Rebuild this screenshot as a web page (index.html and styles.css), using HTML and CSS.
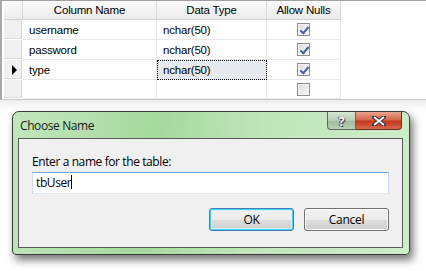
FILE: index.html
```html
<!DOCTYPE html>
<html lang="en">
  <head>
    <meta charset="utf-8">
    <title>Choose Name</title>
    <link rel="stylesheet" href="styles.css">
  </head>
  <body>
<div class="designer">
  <div class="grid">
    <div class="corner"></div>
    <div class="head">Column Name</div>
    <div class="head">Data Type</div>
    <div class="head">Allow Nulls</div>

    <div class="rowhead"></div>
    <div class="cell">username</div>
    <div class="cell">nchar(50)</div>
    <div class="cell check"><span class="box on"></span></div>

    <div class="rowhead"></div>
    <div class="cell">password</div>
    <div class="cell">nchar(50)</div>
    <div class="cell check"><span class="box on"></span></div>

    <div class="rowhead"><span class="pointer"></span></div>
    <div class="cell">type</div>
    <div class="cell current">nchar(50)</div>
    <div class="cell check"><span class="box on"></span></div>

    <div class="rowhead"></div>
    <div class="cell"></div>
    <div class="cell"></div>
    <div class="cell check"><span class="box"></span></div>
  </div>
</div>
<div class="below">
  <div class="dialog">
    <div class="titlebar">
      <span class="title">Choose Name</span>
      <div class="controls">
        <span class="ctl help">?</span>
        <span class="ctl close">
          <svg width="14" height="10" viewBox="0 0 14 10"><path d="M2 1 L12 9 M12 1 L2 9" stroke="#333" stroke-width="4" stroke-linecap="square"/><path d="M2 1 L12 9 M12 1 L2 9" stroke="#fff" stroke-width="2"/></svg>
        </span>
      </div>
    </div>
    <div class="client">
      <div class="label">Enter a name for the table:</div>
      <div class="textbox">tbUser<span class="caret"></span></div>
      <div class="buttons">
        <button class="btn default">OK</button>
        <button class="btn">Cancel</button>
      </div>
    </div>
  </div>
</div>
  </body>
</html>
```

FILE: styles.css
```css
* {
  margin: 0px;
  padding: 0px;
  box-sizing: border-box;
}
body {
  background-color: white;
  width: 426px;
  height: 271px;
  overflow: hidden;
  font-family: 'Liberation Sans', sans-serif;
}
.designer {
  height: 100px;
  border-top: 1px solid #a0a0a0;
  border-left: 2px solid #a9a9a9;
  padding-left: 2px;
  border-bottom: 1px solid #c8c8c8;
}
.grid {
  display: grid;
  grid-template-columns: 19px 134px 110px 74px;
  grid-template-rows: 19px 20px 20px 20px 19px;
  font-size: 11.5px;
  letter-spacing: -0.2px;
  color: black;
}
.corner {
  background: linear-gradient(#fafafa, #ececec);
  border-right: 1px solid #d8d8d8;
  border-bottom: 1px solid #d0d0d0;
}
.head {
  background: linear-gradient(#fbfbfb, #ebebeb);
  border-right: 1px solid #d8d8d8;
  border-bottom: 1px solid #d0d0d0;
  display: flex;
  align-items: center;
  justify-content: center;
}
.rowhead {
  background-color: #f0f0f0;
  border-right: 1px solid #ffffff;
  border-bottom: 1px solid #ffffff;
  box-shadow: inset -1px -1px 0px #dcdcdc;
  display: flex;
  align-items: center;
  justify-content: center;
}
.pointer {
  width: 0px;
  height: 0px;
  border-top: 5px solid transparent;
  border-bottom: 5px solid transparent;
  border-left: 5px solid black;
  margin-left: 2px;
}
.cell {
  border-right: 1px solid #e8e8e8;
  border-bottom: 1px solid #e8e8e8;
  display: flex;
  align-items: center;
  padding-left: 6px;
}
.current {
  background-color: #e6eaef;
  border: 1px dotted black;
  padding-left: 5px;
}
.check {
  justify-content: center;
  padding-left: 0px;
}
.box {
  width: 13px;
  height: 13px;
  border: 1px solid #8f8f8f;
  background: linear-gradient(135deg, #dcdcdc, #f8f8f8);
  box-shadow: inset 0px 0px 0px 1px #f4f4f4;
  position: relative;
}
.box.on::after {
  content: "";
  position: absolute;
  left: 4px;
  top: 1px;
  width: 3px;
  height: 7px;
  border-right: 2px solid #4a5d9c;
  border-bottom: 2px solid #4a5d9c;
  transform: rotate(40deg);
}
.below {
  height: 170px;
  background: linear-gradient(#ececec, #ffffff 10px);
  padding-top: 11px;
  padding-left: 12px;
}
.dialog {
  width: 398px;
  height: 144px;
  border: 1px solid #3a3a3a;
  border-radius: 7px 7px 4px 4px;
  background: linear-gradient(100deg, #c2e6bd 0%, #a6d99e 35%, #bfe5b9 60%, #cfeccb 100%);
  box-shadow: 3px 5px 9px rgba(0, 0, 0, 0.55);
  padding: 0px 6px 6px 5px;
  display: flex;
  flex-direction: column;
  font-family: 'Open Sans', sans-serif;
  letter-spacing: -0.4px;
}
.titlebar {
  height: 26px;
  display: flex;
  justify-content: space-between;
  align-items: flex-start;
}
.title {
  font-size: 12px;
  padding-left: 2px;
  padding-top: 5px;
  color: #1a1a1a;
}
.controls {
  display: flex;
  margin-right: 1px;
  letter-spacing: 0px;
}
.ctl {
  height: 18px;
  display: flex;
  align-items: center;
  justify-content: center;
  border: 1px solid #5c6a5c;
  border-top: none;
}
.help {
  width: 29px;
  border-radius: 0px 0px 0px 4px;
  background: linear-gradient(#d6e6d4, #b7cdb5 50%, #9fba9c 51%, #b9d0b5);
  color: white;
  font-weight: bold;
  font-size: 13px;
  text-shadow: 0px 0px 1px #222, 1px 1px 0px #444, -1px 0px 0px #444;
}
.close {
  width: 46px;
  border-left: none;
  border-color: #6b2a1e;
  border-radius: 0px 0px 4px 0px;
  background: linear-gradient(#e9a48f, #d46a4f 45%, #c2391d 55%, #d9694c);
}
.client {
  flex: 1;
  background-color: #f0f0f0;
  border: 1px solid #5a5a5a;
  padding: 14px 13px 0px 13px;
  font-size: 12px;
  color: black;
}
.label {
  height: 17px;
  line-height: 17px;
}
.textbox {
  margin-top: 2px;
  height: 22px;
  background-color: white;
  border: 1px solid #abadb3;
  border-top-color: #7aa7d6;
  border-left-color: #c9d9ec;
  border-right-color: #c9d9ec;
  border-bottom-color: #e3e9ef;
  padding-left: 3px;
  line-height: 20px;
}
.caret {
  display: inline-block;
  width: 1px;
  height: 14px;
  background-color: black;
  vertical-align: -2px;
}
.buttons {
  display: flex;
  justify-content: flex-end;
  gap: 10px;
  margin-top: 14px;
}
.btn {
  width: 85px;
  height: 23px;
  border: 1px solid #707070;
  border-radius: 3px;
  background: linear-gradient(#f2f2f2, #ebebeb 50%, #dddddd 51%, #cfcfcf);
  box-shadow: inset 0px 0px 0px 1px #fcfcfc;
  font-family: 'Open Sans', sans-serif;
  font-size: 12px;
  letter-spacing: -0.3px;
  color: black;
}
.default {
  border-color: #3c7fb1;
  box-shadow: inset 0px 0px 0px 1px #48d0fa, inset 0px 0px 0px 2px #d5f1fc;
}
```
